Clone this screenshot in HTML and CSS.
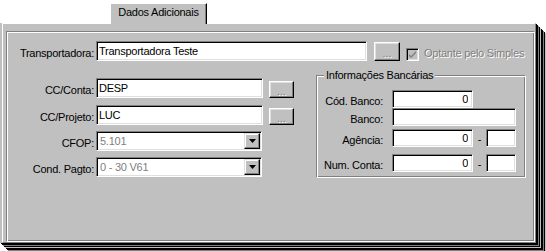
FILE: index.html
```html
<!DOCTYPE html>
<html lang="pt-BR">
<head>
    <meta charset="UTF-8">
    <title>Dados Adicionais</title>
    <link rel="stylesheet" href="styles.css">
</head>
<body>

    <div class="tabs">
        <div class="tab">Dados Adicionais</div>
    </div>

    <div class="window">
        <div class="sheet">
            <div class="panel">

                <div class="row first">
                    <label class="lbl" for="transportadora">Transportadora:</label>
                    <input class="edit w-transp" type="text" id="transportadora" value="Transportadora Teste">
                    <button class="btn btn-big" disabled>...</button>
                    <span class="check">
                        <svg width="9" height="9" viewBox="0 0 9 9"><path d="M1 4 L3 6 L8 1 L8 3 L3 8 L1 6 Z" fill="#808080"/></svg>
                    </span>
                    <span class="disabled-text">Optante pelo Simples</span>
                </div>

                <div class="split">
                    <div class="col-left">
                        <div class="row">
                            <label class="lbl" for="ccConta">CC/Conta:</label>
                            <input class="edit w-cc" type="text" id="ccConta" value="DESP">
                            <button class="btn btn-small" disabled>...</button>
                        </div>
                        <div class="row r-projeto">
                            <label class="lbl" for="ccProjeto">CC/Projeto:</label>
                            <input class="edit w-cc" type="text" id="ccProjeto" value="LUC">
                            <button class="btn btn-small" disabled>...</button>
                        </div>
                        <div class="row r-combo">
                            <label class="lbl">CFOP:</label>
                            <div class="combo">
                                <span class="combo-text">5.101</span>
                                <span class="combo-btn"><svg width="7" height="4" viewBox="0 0 7 4"><path d="M0 0 H7 L3.5 4 Z" fill="#000"/></svg></span>
                            </div>
                        </div>
                        <div class="row r-combo">
                            <label class="lbl">Cond. Pagto:</label>
                            <div class="combo">
                                <span class="combo-text">0 - 30 V61</span>
                                <span class="combo-btn"><svg width="7" height="4" viewBox="0 0 7 4"><path d="M0 0 H7 L3.5 4 Z" fill="#000"/></svg></span>
                            </div>
                        </div>
                    </div>

                    <div class="bank">
                        <div class="bank-title">Informações Bancárias</div>
                        <div class="bank-row b-cod">
                            <label class="blbl" for="codBanco">Cód. Banco:</label>
                            <input class="edit small num w-num" type="text" id="codBanco" value="0">
                        </div>
                        <div class="bank-row b-banco">
                            <label class="blbl" for="banco">Banco:</label>
                            <input class="edit small w-banco" type="text" id="banco" value="">
                        </div>
                        <div class="bank-row b-agencia">
                            <label class="blbl" for="agencia">Agência:</label>
                            <input class="edit small num w-num" type="text" id="agencia" value="0">
                            <span class="dash">-</span>
                            <input class="edit small w-dv" type="text" value="">
                        </div>
                        <div class="bank-row b-conta">
                            <label class="blbl" for="numConta">Num. Conta:</label>
                            <input class="edit small num w-num" type="text" id="numConta" value="0">
                            <span class="dash">-</span>
                            <input class="edit small w-dv" type="text" value="">
                        </div>
                    </div>
                </div>

            </div>
        </div>
    </div>

</body>
</html>
```

FILE: styles.css
```css
body {
    margin: 0;
    padding: 0;
    background-color: #ffffff;
    font-family: 'Liberation Sans', Arial, sans-serif;
    font-size: 11px;
    letter-spacing: -0.25px;
    color: #000000;
    width: 546px;
    height: 251px;
    overflow: hidden;
}

/* pestañas */
.tabs {
    height: 23px;
    display: flex;
    align-items: flex-end;
    padding-left: 110px;
}

.tab {
    position: relative;
    z-index: 1;
    box-sizing: border-box;
    width: 97px;
    height: 21px;
    margin-bottom: -1px;
    background-color: #c0c0c0;
    border-top: 1px solid #ffffff;
    border-left: 1px solid #ffffff;
    border-right: 1px solid #000000;
    box-shadow: inset -1px 0 #808080;
    text-align: center;
    line-height: 16px;
}

.window {
    width: 536px;
    border-left: 2px solid #c0c0c0;
    box-sizing: border-box;
    box-shadow: 1px 1px 0 #000, 2px 2px 0 #000, 3px 3px 0 #808080, 4px 4px 0 #000,
                5px 5px 0 #c0c0c0, 6px 6px 0 #000, 7px 7px 0 #000, 8px 8px 0 #808080,
                9px 9px 0 #000, 10px 10px 0 #c0c0c0;
}

.sheet {
    box-sizing: border-box;
    width: 534px;
    height: 220px;
    padding: 7px 0 0 3px;
    background-color: #c0c0c0;
    border-top: 1px solid #ffffff;
    border-left: 1px solid #ffffff;
    border-right: 1px solid #808080;
    border-bottom: 1px solid #808080;
}

.panel {
    box-sizing: border-box;
    width: 529px;
    height: 211px;
    padding-top: 9px;
    border: 1px solid;
    border-color: #808080 #ffffff #ffffff #808080;
    box-shadow: inset 1px 1px #ffffff, inset -1px -1px #808080;
}

.row {
    display: flex;
    align-items: center;
    height: 20px;
}

.lbl {
    width: 87px;
    margin-right: 2px;
    padding-top: 3px;
    text-align: right;
    white-space: nowrap;
}

/* campos hundidos */
.edit {
    box-sizing: border-box;
    height: 20px;
    margin: 0;
    padding: 0 2px;
    font: inherit;
    letter-spacing: inherit;
    color: #000000;
    background-color: #ffffff;
    border: 1px solid;
    border-color: #808080 #ffffff #ffffff #808080;
    box-shadow: inset 1px 1px #000000, inset -1px -1px #dfdfdf;
    outline: none;
}

.edit.small {
    height: 18px;
}

.num {
    text-align: right;
    padding-right: 4px;
}

.w-transp { width: 271px; }
.w-cc { width: 167px; }
.w-num { width: 81px; }
.w-banco { width: 124px; }
.w-dv { width: 30px; }

/* botones */
.btn {
    box-sizing: border-box;
    padding: 0;
    font: inherit;
    letter-spacing: 0;
    color: #808080;
    text-shadow: 1px 1px 0 #ffffff;
    background-color: #c0c0c0;
    border: 1px solid;
    border-color: #ffffff #000000 #000000 #ffffff;
    box-shadow: inset -1px -1px #808080, inset 1px 1px #dfdfdf;
    align-self: flex-end;
    line-height: 12px;
    padding-top: 2px;
}

.btn-big {
    width: 26px;
    height: 19px;
    margin-left: 7px;
}

.btn-small {
    width: 25px;
    height: 17px;
    margin-left: 6px;
}

.check {
    box-sizing: border-box;
    width: 13px;
    height: 13px;
    margin-left: 6px;
    align-self: flex-end;
    display: flex;
    align-items: center;
    justify-content: center;
    background-color: #c0c0c0;
    border: 1px solid;
    border-color: #808080 #ffffff #ffffff #808080;
    box-shadow: inset 1px 1px #000000, inset -1px -1px #dfdfdf;
}

.disabled-text {
    margin-left: 5px;
    padding-top: 4px;
    color: #808080;
    text-shadow: 1px 1px 0 #ffffff;
    white-space: nowrap;
}

.split {
    display: flex;
    align-items: flex-start;
}

.col-left {
    margin-top: 17px;
}

.r-projeto {
    margin-top: 7px;
}

.r-combo {
    margin-top: 6px;
}

/* combos deshabilitados */
.combo {
    box-sizing: border-box;
    width: 166px;
    height: 20px;
    display: flex;
    align-items: center;
    background-color: #ffffff;
    border: 1px solid;
    border-color: #808080 #ffffff #ffffff #808080;
    box-shadow: inset 1px 1px #000000, inset -1px -1px #dfdfdf;
    padding: 1px;
}

.combo-text {
    flex: 1;
    padding-left: 2px;
    color: #808080;
}

.combo-btn {
    box-sizing: border-box;
    width: 16px;
    height: 16px;
    display: flex;
    align-items: center;
    justify-content: center;
    background-color: #c0c0c0;
    border: 1px solid;
    border-color: #dfdfdf #000000 #000000 #dfdfdf;
    box-shadow: inset -1px -1px #808080, inset 1px 1px #ffffff;
}

/* grupo bancario */
.bank {
    box-sizing: border-box;
    width: 210px;
    height: 103px;
    margin-top: 14px;
    margin-left: 22px;
    border: 1px solid;
    border-color: #808080 #ffffff #ffffff #808080;
    box-shadow: inset 1px 1px #ffffff, inset -1px -1px #808080;
}

.bank-title {
    width: fit-content;
    margin: -7px 0 0 7px;
    padding: 0 2px;
    line-height: 13px;
    background-color: #c0c0c0;
}

.bank-row {
    display: flex;
    align-items: center;
    height: 18px;
}

.blbl {
    width: 66px;
    margin-right: 9px;
    padding-top: 3px;
    text-align: right;
    white-space: nowrap;
}

.b-cod { margin-top: 8px; }
.b-banco { margin-top: 0; }
.b-agencia { margin-top: 3px; }
.b-conta { margin-top: 7px; }

.dash {
    width: 13px;
    text-align: center;
    padding-top: 2px;
}
```
